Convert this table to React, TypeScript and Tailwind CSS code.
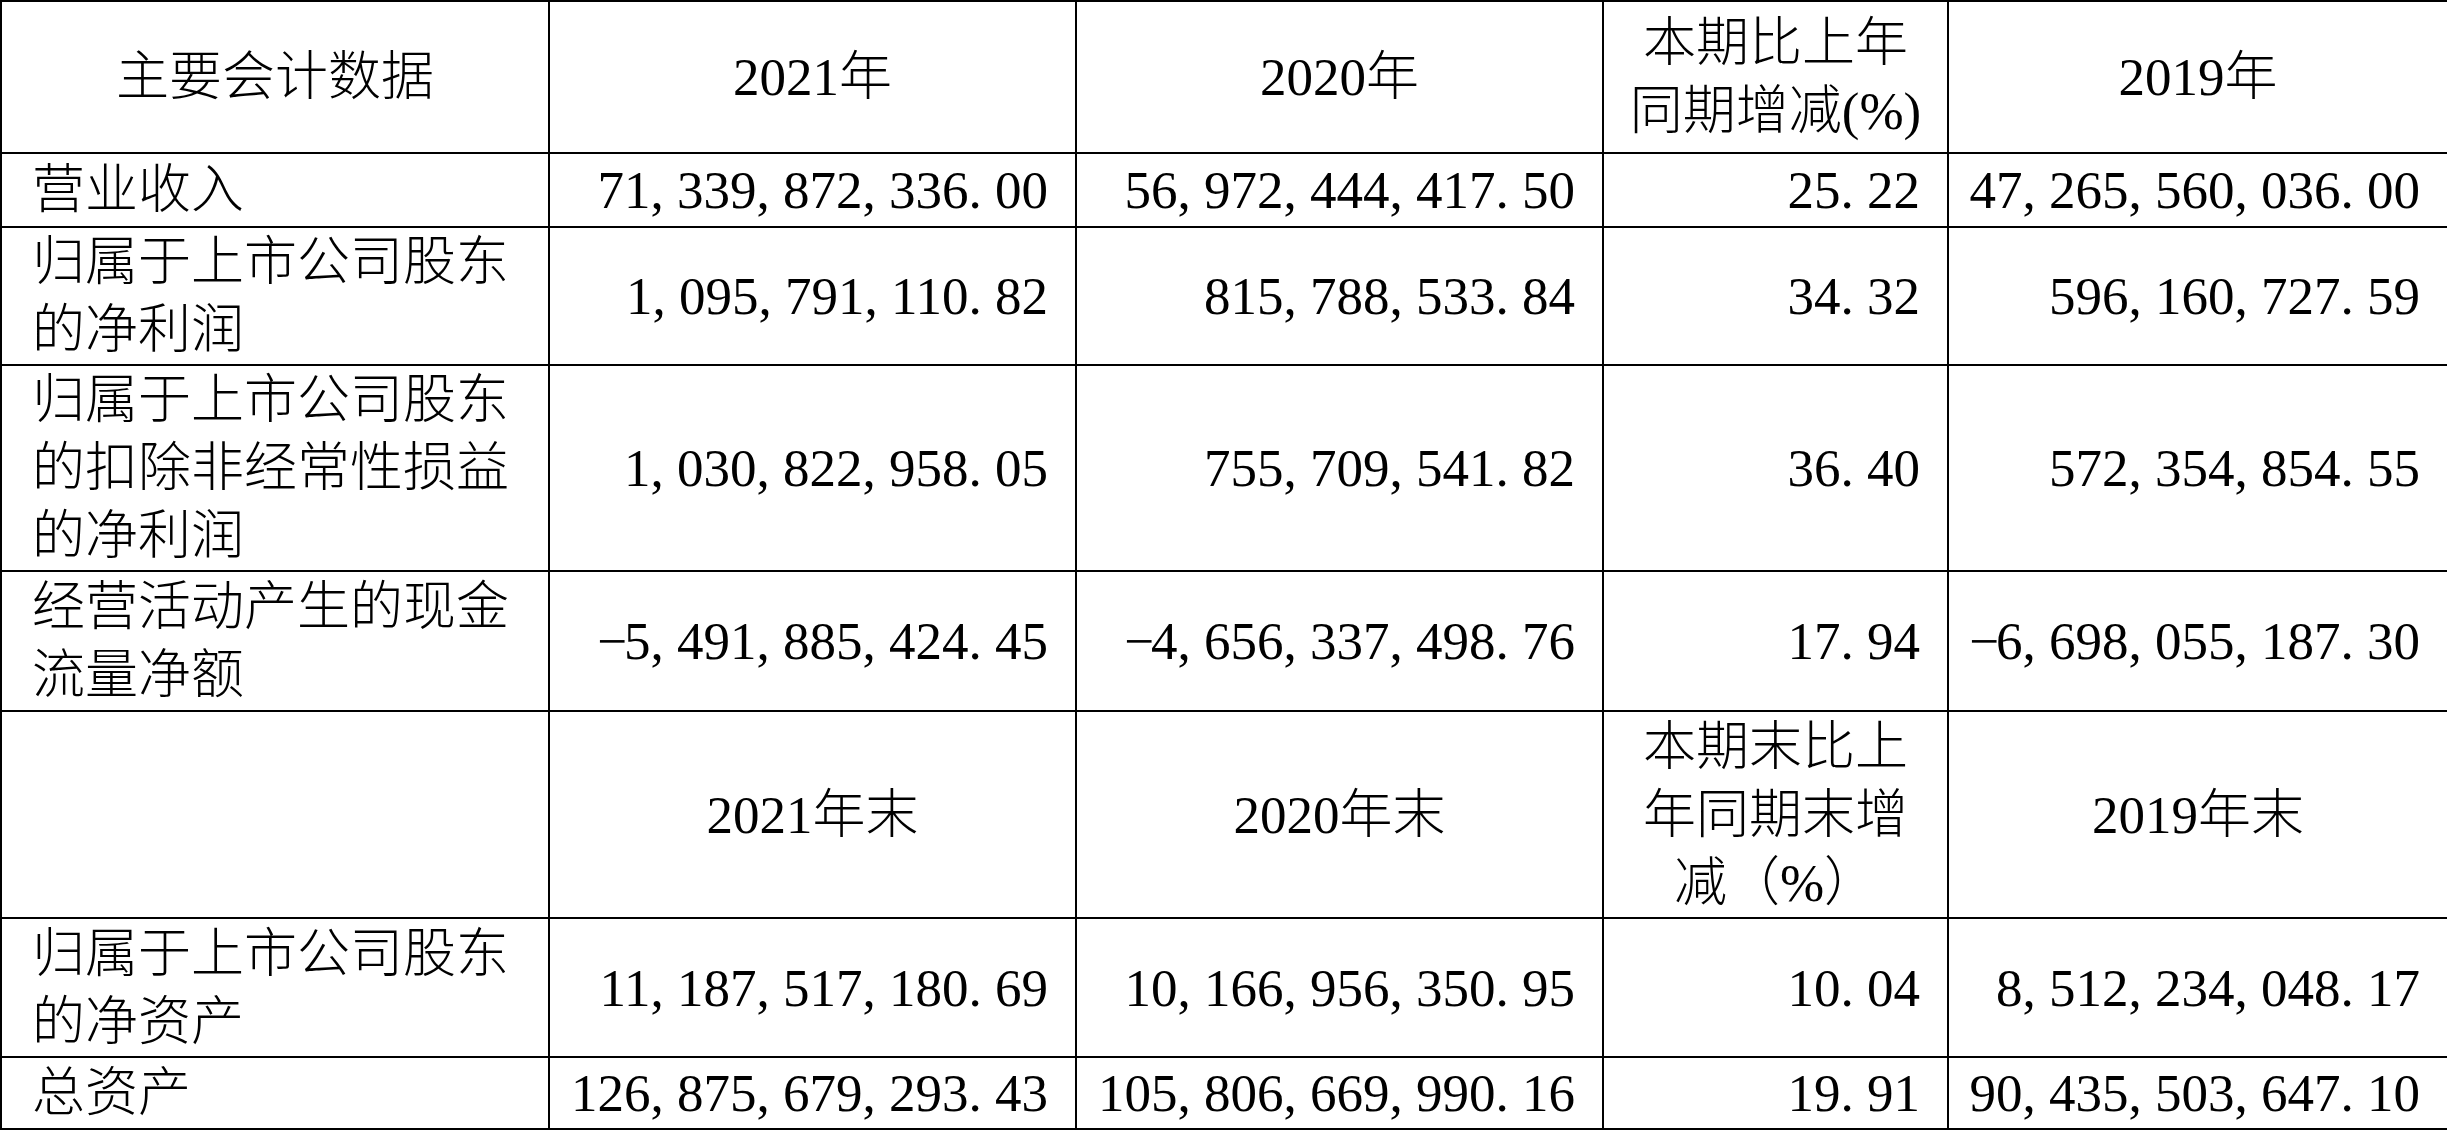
import React from 'react';

// 主要会计数据 table, values in 元

type Row = { label: string[]; values: string[]; h: string };

const top: Row[] = [
	{ label: ['营业收入'], values: ['71,339,872,336.00', '56,972,444,417.50', '25.22', '47,265,560,036.00'], h: 'h-[74px]' },
	{ label: ['归属于上市公司股东', '的净利润'], values: ['1,095,791,110.82', '815,788,533.84', '34.32', '596,160,727.59'], h: 'h-[138px]' },
	{
		label: ['归属于上市公司股东', '的扣除非经常性损益', '的净利润'],
		values: ['1,030,822,958.05', '755,709,541.82', '36.40', '572,354,854.55'],
		h: 'h-[206px]',
	},
	{ label: ['经营活动产生的现金', '流量净额'], values: ['-5,491,885,424.45', '-4,656,337,498.76', '17.94', '-6,698,055,187.30'], h: 'h-[140px]' },
];

const bottom: Row[] = [
	{ label: ['归属于上市公司股东', '的净资产'], values: ['11,187,517,180.69', '10,166,956,350.95', '10.04', '8,512,234,048.17'], h: 'h-[139px]' },
	{ label: ['总资产'], values: ['126,875,679,293.43', '105,806,669,990.16', '19.91', '90,435,503,647.10'], h: 'h-[72px]' },
];

const cell = 'border-2 border-black align-middle';

// half-width punctuation like the original report font
function Num({ text }: { text: string }) {
	return (
		<span className="whitespace-nowrap">
			{text.split('').map((c, i) => {
				if (c === ',' || c === '.') {
					return (
						<span key={i} className="inline-block w-[0.5em] text-left">
							{c}
						</span>
					);
				}
				if (c === '-') {
					return (
						<span key={i} className="inline-block w-[0.5em] text-left">
							−
						</span>
					);
				}
				return <span key={i}>{c}</span>;
			})}
		</span>
	);
}

function Lines({ lines }: { lines: string[] }) {
	return (
		<>
			{lines.map((l, i) => (
				<div key={i} className="whitespace-nowrap">
					{l}
				</div>
			))}
		</>
	);
}

function Body({ row }: { row: Row }) {
	return (
		<tr className={row.h}>
			<td className={`${cell} pl-[30px] text-left`}>
				<Lines lines={row.label} />
			</td>
			{row.values.map((v, i) => (
				<td key={i} className={`${cell} pr-[27px] text-right`}>
					<Num text={v} />
				</td>
			))}
		</tr>
	);
}

export default function App() {
	return (
		<div className="min-h-screen bg-white text-black">
			<table className="w-[2447px] table-fixed border-collapse font-['Liberation_Serif','Noto_Sans_CJK_SC',serif] text-[53px] leading-[68px] font-light">
				<colgroup>
					<col className="w-[548px]" />
					<col className="w-[527px]" />
					<col className="w-[527px]" />
					<col className="w-[345px]" />
					<col className="w-[500px]" />
				</colgroup>
				<tbody>
					<tr className="h-[152px]">
						<td className={`${cell} text-center`}>主要会计数据</td>
						<td className={`${cell} text-center`}>2021年</td>
						<td className={`${cell} text-center`}>2020年</td>
						<td className={`${cell} text-center`}>
							<Lines lines={['本期比上年', '同期增减(%)']} />
						</td>
						<td className={`${cell} text-center`}>2019年</td>
					</tr>
					{top.map((r, i) => (
						<Body key={i} row={r} />
					))}
					<tr className="h-[207px]">
						<td className={cell}></td>
						<td className={`${cell} text-center`}>2021年末</td>
						<td className={`${cell} text-center`}>2020年末</td>
						<td className={`${cell} text-center`}>
							<Lines lines={['本期末比上', '年同期末增', '减（%）']} />
						</td>
						<td className={`${cell} text-center`}>2019年末</td>
					</tr>
					{bottom.map((r, i) => (
						<Body key={i} row={r} />
					))}
				</tbody>
			</table>
		</div>
	);
}
